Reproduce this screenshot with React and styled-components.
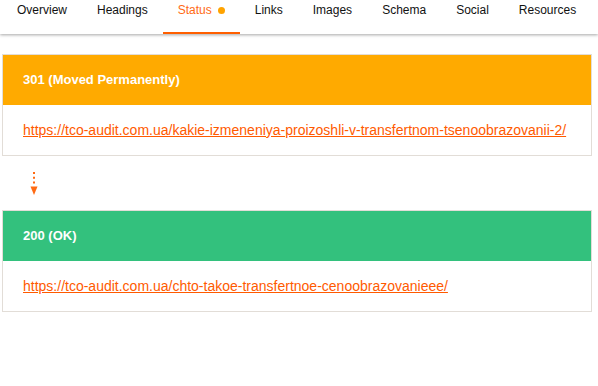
import React from 'react';
import styled, { createGlobalStyle } from 'styled-components';

const GlobalStyle = createGlobalStyle`
  body {
    margin: 0;
    background: #fff;
    font-family: "Liberation Sans", Arial, sans-serif;
  }
`;

const TabBar = styled.nav`
  display: flex;
  height: 34px;
  padding-left: 2px;
  box-shadow: 0 1px 3px rgba(0, 0, 0, 0.35);
`;

const Tab = styled.div`
  display: flex;
  align-items: flex-start;
  box-sizing: border-box;
  height: 34px;
  padding: 3px 15px 0;
  font-size: 12px;
  line-height: 14px;
  color: ${p => (p.$active ? '#ff6a13' : '#111')};
  border-bottom: 2px solid ${p => (p.$active ? '#ff5f00' : 'transparent')};
  cursor: pointer;
`;

const Dot = styled.span`
  width: 7px;
  height: 7px;
  margin: 4px 0 0 6px;
  border-radius: 50%;
  background: #ffa300;
`;

const Content = styled.main`
  padding: 20px 6px 0 2px;
`;

const Card = styled.section`
  border: 1px solid #e2ddd7;
`;

const CardHead = styled.div`
  height: 50px;
  padding: 0 20px;
  line-height: 50px;
  font-size: 13px;
  font-weight: bold;
  color: #fff;
  background: ${p => p.$bg};
`;

const CardBody = styled.div`
  height: 50px;
  padding: 0 20px;
  line-height: 50px;
  background: #fff;
`;

const Url = styled.a`
  font-size: 14px;
  color: #ff5a00;
  text-decoration: underline;
`;

const Redirect = styled.div`
  height: 54px;
  padding: 16px 0 0 28px;
  box-sizing: border-box;
`;

const tabs = ['Overview', 'Headings', 'Status', 'Links', 'Images', 'Schema', 'Social', 'Resources'];

const hops = [
  {
    code: '301 (Moved Permanently)',
    color: '#ffaa00',
    url: 'https://tco-audit.com.ua/kakie-izmeneniya-proizoshli-v-transfertnom-tsenoobrazovanii-2/',
  },
  {
    code: '200 (OK)',
    color: '#33c17d',
    url: 'https://tco-audit.com.ua/chto-takoe-transfertnoe-cenoobrazovanieee/',
  },
];

function Arrow () {
  return (
    <svg width='8' height='24' viewBox='0 0 8 24'>
      <line x1='4' y1='0' x2='4' y2='14' stroke='#ff6a13' strokeWidth='2' strokeDasharray='2 2.7' />
      <path d='M0.5 14.5 H7.5 L4 23 Z' fill='#ff6a13' />
    </svg>
  );
}

export default function App () {
  return (
    <>
      <GlobalStyle />
      <TabBar>
        {tabs.map(t => (
          <Tab key={t} $active={t === 'Status'}>
            {t}
            {t === 'Status' && <Dot />}
          </Tab>
        ))}
      </TabBar>
      <Content>
        {hops.map((h, i) => (
          <React.Fragment key={h.code}>
            {i > 0 && (
              <Redirect>
                <Arrow />
              </Redirect>
            )}
            <Card>
              <CardHead $bg={h.color}>{h.code}</CardHead>
              <CardBody>
                <Url href={h.url}>{h.url}</Url>
              </CardBody>
            </Card>
          </React.Fragment>
        ))}
      </Content>
    </>
  );
}
